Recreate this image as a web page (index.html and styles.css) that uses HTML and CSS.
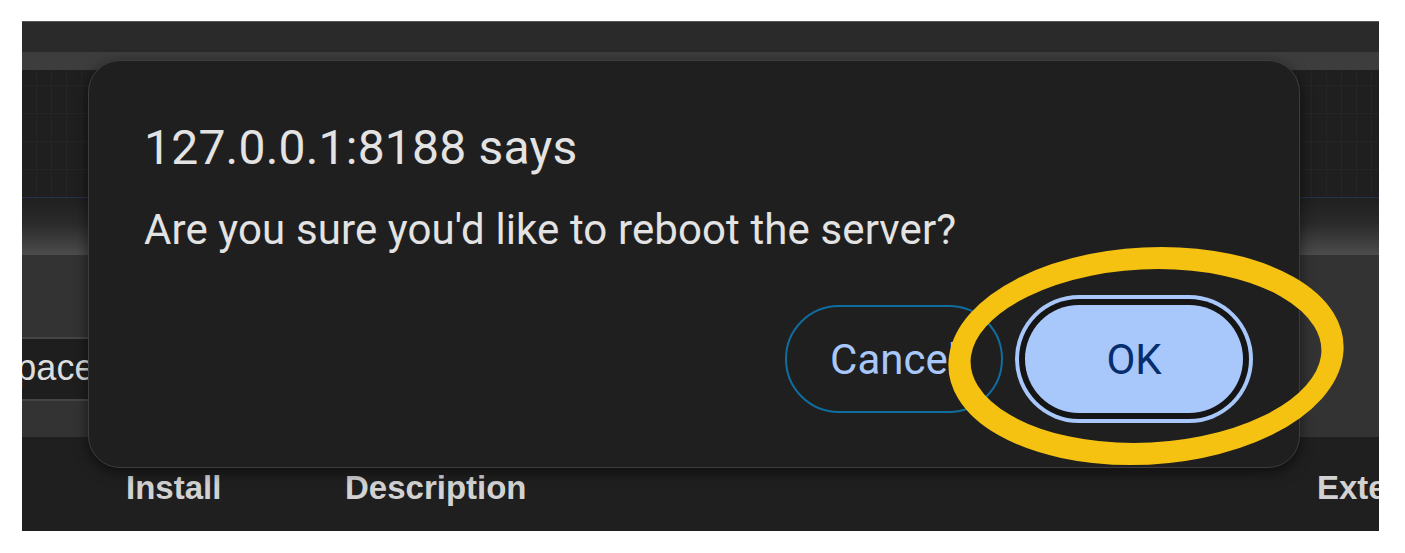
FILE: index.html
```html
<!DOCTYPE html>
<html lang="en">
<head>
<meta charset="utf-8">
<title>Reboot confirm</title>
<link rel="stylesheet" href="styles.css">
</head>
<body>
<div class="frame">
  <div class="topbar"></div>
  <div class="band"></div>
  <div class="canvas"></div>
  <div class="fade"></div>
  <div class="panel">
    <div class="field">Workspace</div>
  </div>
  <div class="cols">
    <span class="col col-install">Install</span>
    <span class="col col-desc">Description</span>
    <span class="col col-ext">Extension</span>
  </div>

  <div class="dialog" role="dialog">
    <h1 class="dlg-title">127.0.0.1:8188 says</h1>
    <p class="dlg-msg">Are you sure you'd like to reboot the server?</p>
    <div class="dlg-actions">
      <button class="btn btn-cancel">Cancel</button>
      <button class="btn btn-ok">OK</button>
    </div>
  </div>

  <svg class="mark" width="1357" height="510" viewBox="0 0 1357 510" aria-hidden="true">
    <g transform="translate(1124 335) skewX(-8)">
      <ellipse cx="0" cy="0" rx="186" ry="98" fill="none" stroke="#f5c211" stroke-width="22"/>
    </g>
  </svg>
</div>
</body>
</html>
```

FILE: styles.css
```css
html, body {
  margin: 0;
  padding: 0;
  background: #ffffff;
}

.frame {
  position: relative;
  width: 1357px;
  height: 510px;
  margin: 21px 0 0 22px;
  overflow: hidden;
  background: #1f1f1f;
  font-family: "Liberation Sans", Arial, sans-serif;
}

.topbar {
  height: 31px;
  box-sizing: border-box;
  background: #2a2a2a;
  border-top: 1px solid #555555;
}

.band {
  height: 18px;
  background: #3d3d3d;
}

.canvas {
  height: 127px;
  background-color: #1f1f1f;
  background-image:
    repeating-linear-gradient(90deg, transparent 0 14px, #252525 14px 15px),
    repeating-linear-gradient(0deg, transparent 0 27px, #252525 27px 28px);
  border-bottom: 1px solid #25324e;
}

.fade {
  height: 57px;
  background: linear-gradient(#202020 0%, #2a2a2a 45%, #4c4c4c 100%);
}

.panel {
  height: 182px;
  box-sizing: border-box;
  padding-top: 82px;
  background: #333333;
}

.field {
  width: 320px;
  height: 64px;
  box-sizing: border-box;
  background: #1e1e1e;
  border-top: 2px solid #454545;
  border-bottom: 2px solid #454545;
  color: #dddddd;
  font-size: 36px;
  line-height: 58px;
  text-indent: -107px;
  white-space: nowrap;
  overflow: hidden;
}

.cols {
  height: 94px;
  box-sizing: border-box;
  padding: 31px 0 0 104px;
  display: grid;
  grid-template-columns: 219px 972px auto;
  color: #d2d2d2;
  font-weight: bold;
  font-size: 33px;
  line-height: 40px;
  white-space: nowrap;
}

.dialog {
  position: absolute;
  left: 66px;
  top: 39px;
  width: 1212px;
  height: 408px;
  box-sizing: border-box;
  padding: 59px 56px 0 55px;
  background: #1f1f1f;
  border: 1px solid #3d3d3d;
  border-radius: 32px;
  box-shadow: 0 4px 14px rgba(0, 0, 0, 0.55);
  font-family: Roboto, "Noto Sans", sans-serif;
}

.dlg-title {
  margin: 0;
  color: #e3e3e3;
  font-size: 48px;
  font-weight: 400;
  line-height: 56px;
  letter-spacing: 0.22px;
}

.dlg-msg {
  margin: 29px 0 0 0;
  color: #e3e3e3;
  font-size: 42px;
  line-height: 50px;
  letter-spacing: 0.11px;
}

.dlg-actions {
  margin-top: 50px;
  display: flex;
  justify-content: flex-end;
  gap: 22px;
}

.btn {
  width: 218px;
  height: 108px;
  box-sizing: border-box;
  border-radius: 54px;
  font-family: Roboto, "Noto Sans", sans-serif;
  font-size: 42px;
  font-weight: 400;
  padding: 0;
}

.btn-cancel {
  background: transparent;
  border: 2px solid #0f6d9f;
  color: #a8c7fa;
}

.btn-ok {
  background: #a8c7fa;
  border: none;
  color: #062e6f;
  box-shadow: 0 0 0 6px #151515, 0 0 0 10px #a8c7fa;
}

.mark {
  position: absolute;
  left: 0;
  top: 0;
  pointer-events: none;
}
```
